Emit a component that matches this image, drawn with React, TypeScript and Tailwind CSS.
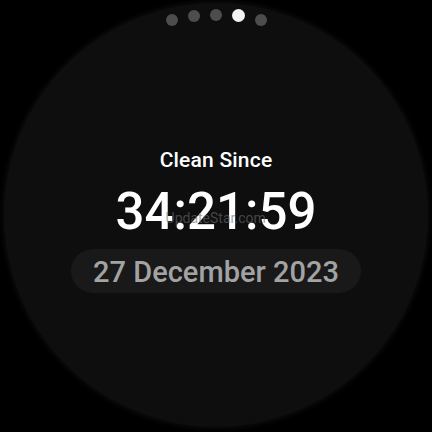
import React from 'react';

const dots = [
    { cls: 'mt-[6px] w-[12px] h-[12px] bg-[#4d4d4d]' },
    { cls: 'mt-[2px] w-[12px] h-[12px] bg-[#4d4d4d]' },
    { cls: 'mt-[1px] w-[12px] h-[12px] bg-[#4d4d4d]' },
    { cls: 'mt-[1px] w-[13px] h-[13px] bg-[#f2f2f2]' },
    { cls: 'mt-[6px] w-[12px] h-[12px] bg-[#4d4d4d]' },
];

export default function App() {
    return (
        <div
            className="relative w-[432px] h-[432px] bg-black overflow-hidden flex flex-col items-center pt-[3px]"
            style={{ fontFamily: 'Roboto, "Noto Sans", sans-serif' }}
        >
            {/* watch face */}
            <div className="w-[424px] h-[424px] rounded-full bg-[#0e0e0e] shadow-[0_0_4px_2px_#0b0b0b] flex flex-col items-center">
                {/* page indicator */}
                <div className="mt-[5px] flex items-start gap-[10px]">
                    {dots.map((d, i) => (
                        <div key={i} className={`rounded-full ${d.cls}`} />
                    ))}
                </div>

                <div className="mt-[122px] text-[21px] leading-[24px] font-medium text-white tracking-[0.2px]">
                    Clean Since
                </div>

                <div className="relative mt-[12px] text-[51px] leading-[56px] font-medium text-white">
                    34:21:59
                    {/* watermark */}
                    <span className="absolute left-[50px] top-[26px] text-[14px] leading-[16px] font-normal text-[#6b6b6b] opacity-60 whitespace-nowrap">
                        UpdateStar.com
                    </span>
                </div>

                <div className="mt-[9px] w-[290px] h-[44px] rounded-full bg-[#191919] flex items-center justify-center pt-[2px]">
                    <span className="text-[29px] leading-[44px] text-[#a3a3a3] font-medium">27 December 2023</span>
                </div>
            </div>
        </div>
    );
}
